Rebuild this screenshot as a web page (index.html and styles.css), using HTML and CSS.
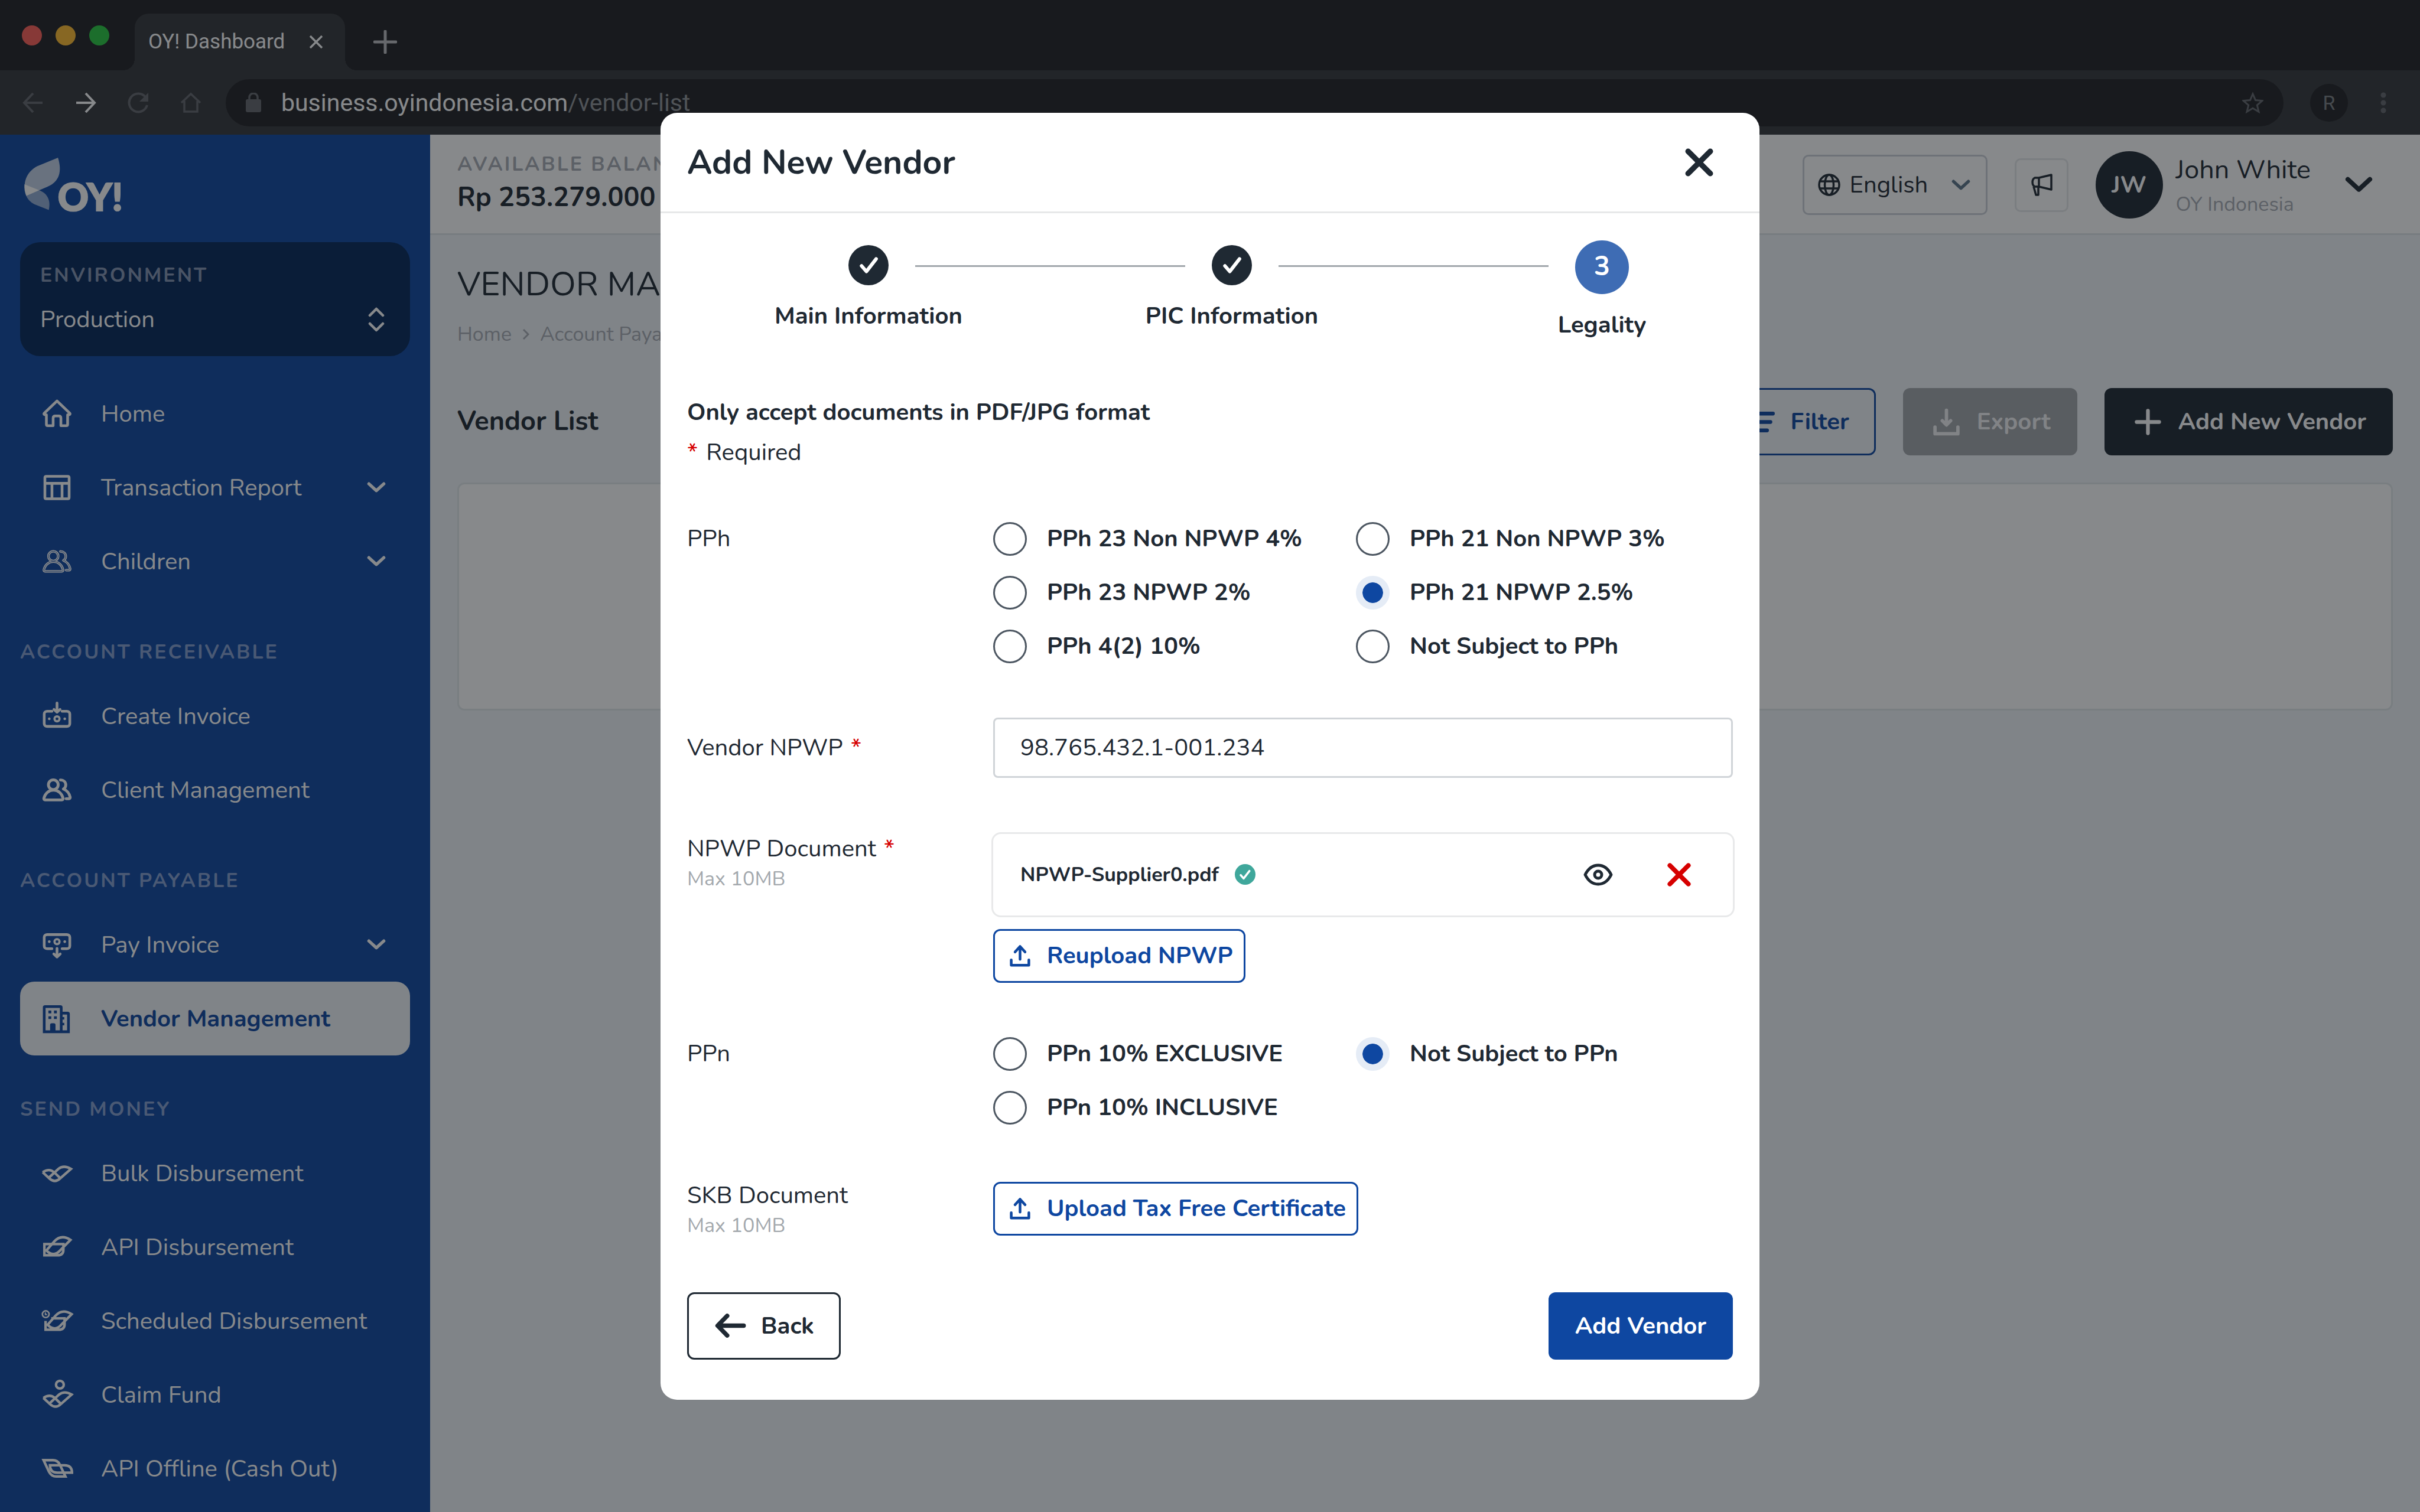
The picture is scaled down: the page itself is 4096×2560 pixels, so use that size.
FILE: index.html
```html
<!DOCTYPE html>
<html lang="en">
<head>
<meta charset="utf-8">
<title>OY! Dashboard</title>
<link rel="stylesheet" href="styles.css">
</head>
<body>
<svg class="sprite" aria-hidden="true">
  <symbol id="chevron" viewBox="0 0 30 18"><path d="M3 3l12 11L27 3" fill="none" stroke="currentColor" stroke-width="5" stroke-linecap="round" stroke-linejoin="round"/></symbol>
  <symbol id="cross" viewBox="0 0 46 46"><path d="M5 5l36 36M41 5L5 41" fill="none" stroke="currentColor" stroke-width="9" stroke-linecap="round"/></symbol>
  <symbol id="tick" viewBox="0 0 34 34"><path d="M7 18l7 8 14-18" fill="none" stroke="currentColor" stroke-width="5" stroke-linecap="round" stroke-linejoin="round"/></symbol>
  <symbol id="upload" viewBox="0 0 16 16"><path d="M8 10V3.4M5 5.6l3-3.3 3 3.3M2.7 10.4v3.2h10.6v-3.2" fill="none" stroke="currentColor" stroke-width="1.6" stroke-linecap="round" stroke-linejoin="round"/></symbol>
  <symbol id="users" viewBox="0 0 20 20"><g fill="none" stroke-linecap="round" stroke-linejoin="round"><circle cx="7.8" cy="6.9" r="2.9"/><path d="M2.2 15c.6-2.8 2.9-4.9 5.7-4.9s5.1 2.1 5.7 4.9c.1.5-.2.9-.7.9H2.9c-.5 0-.8-.4-.7-.9zM12 4.1c1.9 0 3.2 1.2 3.2 2.9 0 1-.5 1.9-1.4 2.4 2 .8 3.6 2.8 4 4.9.1.5-.2.9-.7.9h-1.700"/></g></symbol>
  <symbol id="leaves" viewBox="0 0 20 20"><path d="M1.5 9.4l4 3.7q3.2 2.9 6.3 0l6.5-5.7q-4.3-2.5-7.5 0l-5.6 5.2M1.5 9.4q3.800-2.600 6.800 0l3.600 3.500" fill="none" stroke="currentColor" stroke-width="1.5"/></symbol>
</svg>

<header class="browser">
  <div class="tabstrip">
    <div class="lights"><i class="light red"></i><i class="light amber"></i><i class="light green"></i></div>
    <div class="tab">
      <span>OY! Dashboard</span>
      <button class="bare" aria-label="Close tab"><svg width="24" height="24" viewBox="0 0 24 24"><path d="M2 2l20 20M22 2L2 22" stroke="currentColor" stroke-width="3.500"/></svg></button>
    </div>
    <button class="bare newtab" aria-label="New tab"><svg width="40" height="40" viewBox="0 0 40 40"><path d="M20 2v36M2 20h36" stroke="currentColor" stroke-width="5" stroke-linecap="round"/></svg></button>
  </div>
  <div class="toolbar">
    <div class="navbtns">
      <button class="bare faint" aria-label="Back"><svg width="36" height="36" viewBox="0 0 36 36"><path d="M34 18H3M18 2L3 18l15 16" fill="none" stroke="currentColor" stroke-width="4"/></svg></button>
      <button class="bare" aria-label="Forward"><svg width="36" height="36" viewBox="0 0 36 36"><path d="M2 18h31M18 2l15 16-15 16" fill="none" stroke="currentColor" stroke-width="4"/></svg></button>
      <button class="bare faint" aria-label="Reload"><svg width="36" height="36" viewBox="0 0 36 36"><path d="M30 8A15.500 15.500 0 1 0 33 22" fill="none" stroke="currentColor" stroke-width="4"/><path d="M35 1v15H20z" fill="currentColor"/></svg></button>
      <button class="bare faint" aria-label="Home"><svg width="36" height="36" viewBox="0 0 36 36"><path d="M2 18L18 3l16 15M7 15v18h22V15" fill="none" stroke="currentColor" stroke-width="3.500"/></svg></button>
    </div>
    <div class="address">
      <svg class="faint" width="26" height="34" viewBox="0 0 26 34"><rect y="11" width="26" height="22" rx="3" fill="currentColor"/><path d="M6 12V8a7 7 0 0 1 14 0v4" fill="none" stroke="currentColor" stroke-width="3.500"/></svg>
      <span class="url">business.oyindonesia.com<span class="path">/vendor-list</span></span>
      <svg class="faint" width="36" height="36" viewBox="0 0 36 36"><path d="M18 3l4.500 10.500 11.500 1-8.700 7.500 2.700 11.200L18 27.200 8 33.200 10.700 22 2 14.500l11.500-1z" fill="none" stroke="currentColor" stroke-width="3"/></svg>
    </div>
    <span class="profile">R</span>
    <svg class="faint" width="10" height="36" viewBox="0 0 10 36"><circle cx="5" cy="5" r="4.500" fill="currentColor"/><circle cx="5" cy="18" r="4.500" fill="currentColor"/><circle cx="5" cy="31" r="4.500" fill="currentColor"/></svg>
  </div>
</header>

<div class="app">
  <aside class="sidebar">
    <svg class="logo" viewBox="0 0 630 420" role="img" aria-label="OY!">
      <path d="M222 66C245 140 230 195 165 222L52 270C30 205 50 145 110 112z" fill="#fff" fill-opacity=".75"/>
      <path d="M42 208L120 240C165 255 185 295 173 346L95 315C55 295 38 255 42 208z" fill="#fff" fill-opacity=".55"/>
      <path d="M44 210L120 240 54 269C45 250 42 228 44 210z" fill="#fff"/>
      <text class="logo-text" x="221" y="350">OY!</text>
    </svg>
    <div class="env">
      <label class="caption" for="env">ENVIRONMENT</label>
      <div class="env-pick">
        <select id="env"><option>Production</option></select>
        <svg width="30" height="42" viewBox="0 0 30 42"><path d="M4 14L15 3l11 11M4 28l11 11 11-11" fill="none" stroke="currentColor" stroke-width="4.500" stroke-linecap="round" stroke-linejoin="round"/></svg>
      </div>
    </div>
    <nav>
      <a class="item" href="#"><svg class="ico" viewBox="0 0 20 20"><path d="M10 2.400L17.600 9.700c.4.4.1.9-.4.9h-.9v5.700q0 .8-.8.8h-3.200v-4.500q0-1.300-1.300-1.300H9q-1.300 0-1.300 1.300v4.500H4.500q-.8 0-.8-.8v-5.700H2.800c-.5 0-.8-.5-.4-.9z" fill="none" stroke="currentColor" stroke-width="1.600" stroke-linejoin="round"/></svg><span>Home</span></a>
      <a class="item" href="#"><svg class="ico" viewBox="0 0 20 20"><path d="M3.600 3.300h12.800q.8 0 .8.800v11.800q0 .8-.8.800H3.600q-.8 0-.8-.8V4.100q0-.8.800-.8zM2.800 7.500h14.400M7 7.500v9M13 7.500v9" fill="none" stroke="currentColor" stroke-width="1.600"/></svg><span>Transaction Report</span><svg class="chev"><use href="#chevron"/></svg></a>
      <a class="item" href="#"><svg class="ico" viewBox="0 0 20 20"><use href="#users" stroke="currentColor" stroke-width="1.500"/><use href="#users" stroke="#0e47a1" stroke-width=".3"/></svg><span>Children</span><svg class="chev"><use href="#chevron"/></svg></a>
      <h2 class="caption section">ACCOUNT RECEIVABLE</h2>
      <a class="item" href="#"><svg class="ico" viewBox="0 0 20 20"><path d="M7 7.100H4.200c-1 0-1.800.6-1.800 1.600v5.800c0 1 .8 1.600 1.800 1.600h11.600c1 0 1.800-.6 1.800-1.600V8.700c0-1-.8-1.600-1.800-1.600H13M10 2.200v5.300M8.200 6L10 7.700 11.800 6" fill="none" stroke="currentColor" stroke-width="1.600" stroke-linecap="round" stroke-linejoin="round"/><circle cx="10" cy="11.600" r="1.500" fill="none" stroke="currentColor" stroke-width="1.300"/><circle cx="5.400" cy="11.600" r=".8" fill="currentColor"/><circle cx="14.600" cy="11.600" r=".8" fill="currentColor"/></svg><span>Create Invoice</span></a>
      <a class="item" href="#"><svg class="ico" viewBox="0 0 20 20"><use href="#users" stroke="currentColor" stroke-width="1.700"/></svg><span>Client Management</span></a>
      <h2 class="caption section">ACCOUNT PAYABLE</h2>
      <a class="item" href="#"><svg class="ico" viewBox="0 0 20 20"><path d="M7 12.400H4.200c-1 0-1.800-.6-1.800-1.600V5.600c0-1 .8-1.600 1.800-1.600h11.600c1 0 1.800.6 1.800 1.600v5.200c0 1-.8 1.600-1.800 1.600H13M10 12.200v5M8.100 15.500l1.900 1.800 1.900-1.800" fill="none" stroke="currentColor" stroke-width="1.600" stroke-linecap="round" stroke-linejoin="round"/><circle cx="10" cy="8.200" r="1.500" fill="none" stroke="currentColor" stroke-width="1.300"/><circle cx="5.400" cy="8.200" r=".8" fill="currentColor"/><circle cx="14.600" cy="8.200" r=".8" fill="currentColor"/></svg><span>Pay Invoice</span><svg class="chev"><use href="#chevron"/></svg></a>
      <a class="item active" href="#" aria-current="page"><svg class="ico" viewBox="0 0 20 20"><path fill="currentColor" fill-rule="evenodd" d="M1.600 18.700V3.400q0-1.300 1.300-1.300H12q1.300 0 1.300 1.300V6h3q1.300 0 1.300 1.300v11.400zM3.200 3.700V17h2.700v-3.200q0-1 1-1h1.200q1 0 1 1V17h2.600V3.700zM4.900 5.300h1.700v1.600H4.900zM8.200 5.300h1.700v1.600H8.200zM4.900 8.700h1.700v1.600H4.900zM8.200 8.700h1.700v1.600H8.200zM13.300 7.600v1.500h1v1.500h-1v1.900h1V14h-1v3H16V7.600z"/></svg><span>Vendor Management</span></a>
      <h2 class="caption section">SEND MONEY</h2>
      <a class="item" href="#"><svg class="ico" viewBox="0 0 20 20"><use href="#leaves"/></svg><span>Bulk Disbursement</span></a>
      <a class="item" href="#"><svg class="ico" viewBox="0 0 20 20"><path d="M2.500 8.200h11.300v3.300q0 3.400-3.400 3.400H2.500zM3.700 12l4.800-5.500q4.100-4.300 9.500-.8l-6.800 6.900q-3.600 3.400-7.500-.6z" fill="none" stroke="currentColor" stroke-width="1.500"/></svg><span>API Disbursement</span></a>
      <a class="item" href="#"><svg class="ico" viewBox="0 0 20 20"><path d="M6.600 8.500h7.900v3.300q0 3.400-3.400 3.400H3.200V10M4.400 12.300l4.800-5.500q4.100-4.300 9.500-.8l-6.800 6.900q-3.600 3.400-7.500-.6z" fill="none" stroke="currentColor" stroke-width="1.500"/><circle cx="3.300" cy="6" r="2" fill="none" stroke="currentColor" stroke-width=".9"/><path d="M3.100 4.900v1.300h1" fill="none" stroke="currentColor" stroke-width=".7"/></svg><span>Scheduled Disbursement</span></a>
      <a class="item" href="#"><svg class="ico" viewBox="0 0 20 20"><use href="#leaves" x=".4" y="2.500" width="20" height="20"/><circle cx="11.700" cy="4" r="2.300" fill="none" stroke="currentColor" stroke-width="1.500"/></svg><span>Claim Fund</span></a>
      <a class="item" href="#"><svg class="ico" viewBox="0 0 20 20"><path d="M2 5h5.500q2.800 0 4.100 2.500l3.400 7.200H9.500Q6.800 14.700 5.300 12zM5.800 8h8.700q4.400 0 4.400 4.400H10Q5.800 12.400 5.800 8z" fill="none" stroke="currentColor" stroke-width="1.500"/></svg><span>API Offline (Cash Out)</span></a>
    </nav>
  </aside>

  <div class="main">
    <header class="topbar">
      <div class="balance">
        <span class="caption muted">AVAILABLE BALANCE</span>
        <strong>Rp 253.279.000</strong>
      </div>
      <label class="lang">
        <svg width="38" height="38" viewBox="0 0 38 38"><g fill="none" stroke="currentColor" stroke-width="3.500"><circle cx="19" cy="19" r="17"/><ellipse cx="19" cy="19" rx="7.500" ry="17"/><path d="M3 13h32M3 25h32"/></g></svg>
        <select aria-label="Language"><option>English</option></select>
        <svg class="chev slate"><use href="#chevron"/></svg>
      </label>
      <button class="announce" aria-label="Announcements"><svg width="40" height="40" viewBox="0 0 40 40"><path d="M37 3L16 8H9a6 8 0 0 0 0 15h7l21 5zM16 8v15M7 23l4 14h4V23" fill="none" stroke="currentColor" stroke-width="3.500" stroke-linejoin="round"/></svg></button>
      <div class="user">
        <span class="avatar">JW</span>
        <span class="who"><span class="name">John White</span><span class="org">OY Indonesia</span></span>
        <svg class="bigchev"><use href="#chevron"/></svg>
      </div>
    </header>
    <main class="content">
      <h1>VENDOR MANAGEMENT</h1>
      <div class="crumbs"><a href="#">Home</a><svg width="12" height="20" viewBox="0 0 12 20"><path d="M2 2l8 8-8 8" fill="none" stroke="currentColor" stroke-width="3"/></svg><a href="#">Account Payable</a></div>
      <div class="listbar">
        <h2>Vendor List</h2>
        <button class="btn outline"><svg class="ico" viewBox="0 0 20 20"><path d="M3 5h14.500M5 10h11M7 15h7" stroke="currentColor" stroke-width="2.200" stroke-linecap="round"/></svg>Filter</button>
        <button class="btn disabled" disabled><svg class="ico" viewBox="0 0 20 20"><path d="M10 3v8.500M7.500 9.200l2.500 2.600 2.500-2.600M3.200 13v4h13.600v-4" fill="none" stroke="currentColor" stroke-width="2" stroke-linecap="round" stroke-linejoin="round"/></svg>Export</button>
        <button class="btn dark"><svg class="ico" viewBox="0 0 20 20"><path d="M10 3.300v13.400M3.300 10h13.400" stroke="currentColor" stroke-width="2.200" stroke-linecap="round"/></svg>Add New Vendor</button>
      </div>
      <section class="card"></section>
    </main>
  </div>
</div>

<div class="overlay">
  <form class="modal" role="dialog" aria-labelledby="modal-title">
    <header class="modal-head">
      <h2 id="modal-title">Add New Vendor</h2>
      <button type="button" class="bare" aria-label="Close"><svg width="48" height="48"><use href="#cross"/></svg></button>
    </header>
    <div class="modal-body">
      <ol class="steps">
        <li class="step"><span class="dot"><svg width="40" height="40"><use href="#tick"/></svg></span><span>Main Information</span></li>
        <li class="line" aria-hidden="true"></li>
        <li class="step"><span class="dot"><svg width="40" height="40"><use href="#tick"/></svg></span><span>PIC Information</span></li>
        <li class="line" aria-hidden="true"></li>
        <li class="step current"><span class="dot">3</span><span>Legality</span></li>
      </ol>
      <div class="intro"><strong>Only accept documents in PDF/JPG format</strong><span><span class="req">*</span> Required</span></div>

      <div class="rows">
        <div class="row" role="radiogroup" aria-labelledby="pph">
          <span class="field" id="pph">PPh</span>
          <div class="options">
            <label><input type="radio" name="pph">PPh 23 Non NPWP 4%</label>
            <label><input type="radio" name="pph">PPh 21 Non NPWP 3%</label>
            <label><input type="radio" name="pph">PPh 23 NPWP 2%</label>
            <label><input type="radio" name="pph" checked>PPh 21 NPWP 2.5%</label>
            <label><input type="radio" name="pph">PPh 4(2) 10%</label>
            <label><input type="radio" name="pph">Not Subject to PPh</label>
          </div>
        </div>
        <div class="row middle">
          <label class="field" for="npwp">Vendor NPWP <span class="req">*</span></label>
          <input class="text" id="npwp" type="text" value="98.765.432.1-001.234">
        </div>
        <div class="row">
          <div class="field">NPWP Document <span class="req">*</span><small>Max 10MB</small></div>
          <div class="uploads">
            <div class="file">
              <span class="filename">NPWP-Supplier0.pdf</span>
              <span class="ok"><svg width="24" height="24"><use href="#tick"/></svg></span>
              <button type="button" class="bare eye" aria-label="Preview"><svg width="50" height="38" viewBox="0 0 50 38"><path d="M3 19C8 9 16 3 25 3s17 6 22 16c-5 10-13 16-22 16S8 29 3 19z" fill="none" stroke="currentColor" stroke-width="5" stroke-linejoin="round"/><circle cx="25" cy="19" r="6" fill="none" stroke="currentColor" stroke-width="5"/></svg></button>
              <button type="button" class="bare remove" aria-label="Remove"><svg width="40" height="40"><use href="#cross"/></svg></button>
            </div>
            <button type="button" class="btn outline small"><svg class="up"><use href="#upload"/></svg>Reupload NPWP</button>
          </div>
        </div>
        <div class="row" role="radiogroup" aria-labelledby="ppn">
          <span class="field" id="ppn">PPn</span>
          <div class="options">
            <label><input type="radio" name="ppn">PPn 10% EXCLUSIVE</label>
            <label><input type="radio" name="ppn" checked>Not Subject to PPn</label>
            <label><input type="radio" name="ppn">PPn 10% INCLUSIVE</label>
          </div>
        </div>
        <div class="row">
          <div class="field">SKB Document<small>Max 10MB</small></div>
          <div class="uploads"><button type="button" class="btn outline small"><svg class="up"><use href="#upload"/></svg>Upload Tax Free Certificate</button></div>
        </div>
      </div>

      <footer class="actions">
        <button type="button" class="btn ghost"><svg class="ico" viewBox="0 0 20 20"><path d="M17.800 10H2.500M8 4.200L2.300 10 8 15.800" fill="none" stroke="currentColor" stroke-width="2.600" stroke-linecap="round" stroke-linejoin="round"/></svg>Back</button>
        <button type="submit" class="btn primary">Add Vendor</button>
      </footer>
    </div>
  </form>
</div>
</body>
</html>
```
FILE: styles.css
```css
:root {
  --ink: #1f2933;
  --blue: #0e47a1;
  --red: #d60000;
  --muted: #a9adb5;
}

* { box-sizing: border-box; }

body {
  margin: 0;
  min-height: 100vh;
  display: flex;
  flex-direction: column;
  overflow: hidden;
  background: #f0f4f8;
  color: var(--ink);
  font: 40px/56px "Nunito", "Lato", sans-serif;
}

h1, h2, ol { margin: 0; padding: 0; font-weight: 400; }
a { color: inherit; text-decoration: none; }
svg { display: block; flex: none; }
button, input, select { font: inherit; color: inherit; }
select { appearance: none; border: 0; padding: 0; background: none; flex: 1; min-width: 0; }

.sprite { position: absolute; width: 0; height: 0; }
.bare { border: 0; padding: 0; background: none; }
.ico { width: 57px; height: 57px; }
.chev { width: 32px; height: 19px; }
.bigchev { width: 47px; height: 28px; margin-left: 58px; }
.slate { color: #5c7488; }
.faint { color: #64676d; }
.req { color: var(--red); padding-right: 4px; }

/* browser chrome */
.browser { font-family: Roboto, sans-serif; color: #fff; }
.tabstrip {
  display: flex;
  align-items: center;
  height: 119px;
  background: #202124;
}
.lights { display: flex; gap: 23px; padding-left: 37px; }
.light { width: 34px; height: 34px; border-radius: 50%; }
.red { background: #ff5f57; }
.amber { background: #febb2e; }
.green { background: #28c840; }
.tab {
  position: relative;
  display: flex;
  align-items: center;
  justify-content: space-between;
  align-self: flex-end;
  width: 356px;
  height: 96px;
  margin-left: 43px;
  padding: 0 37px 0 23px;
  border-radius: 24px 24px 0 0;
  background: #35363a;
  font-size: 35px;
}
.tab::before, .tab::after {
  content: "";
  position: absolute;
  bottom: 0;
  width: 20px;
  height: 20px;
}
.tab::before { right: 100%; background: radial-gradient(circle at 0 0, transparent 20px, #35363a 20px); }
.tab::after { left: 100%; background: radial-gradient(circle at 100% 0, transparent 20px, #35363a 20px); }
.newtab { margin: 22px 0 0 48px; color: #bcbdc0; }
.toolbar {
  display: flex;
  align-items: center;
  height: 109px;
  padding: 0 57px 0 38px;
  background: #35363a;
}
.navbtns { display: flex; gap: 53px; }
.address {
  flex: 1;
  display: flex;
  align-items: center;
  gap: 34px;
  height: 80px;
  margin: 0 45px 0 41px;
  padding: 0 34px;
  border-radius: 40px;
  background: #202124;
  font-size: 41px;
}
.url { flex: 1; }
.path { color: #8f9296; }
.profile {
  width: 64px;
  height: 64px;
  margin-right: 55px;
  border-radius: 50%;
  background: #202124;
  color: #7d8085;
  font-size: 34px;
  line-height: 64px;
  text-align: center;
}

/* application shell */
.app { flex: 1; display: flex; }
.sidebar {
  width: 728px;
  flex: none;
  padding: 18px 34px 0;
  background: var(--blue);
  color: #fff;
}
.logo { width: 199px; height: 133px; margin-left: -6px; }
.logo-text {
  font: 900 204px "Lato", sans-serif;
  fill: #fff;
  stroke: #fff;
  stroke-width: 7px;
}
.caption {
  font-size: 34px;
  line-height: 44px;
  font-weight: 700;
  letter-spacing: 3px;
}
.env {
  margin: 31px 0 35px;
  padding: 34px;
  border-radius: 34px;
  background: #052658;
}
.env .caption { display: block; color: #8495b3; }
.env-pick {
  display: flex;
  align-items: center;
  height: 56px;
  margin-top: 25px;
  padding-right: 8px;
}
.item {
  display: flex;
  align-items: center;
  gap: 46px;
  height: 125px;
  padding: 0 41px 0 34px;
  border-radius: 24px;
}
.item span { flex: 1; }
.active { background: #f0f4f8; color: var(--blue); font-weight: 700; }
.section { padding: 69px 0 24px; color: #849fd0; }

.main { flex: 1; min-width: 0; }
.topbar {
  display: flex;
  align-items: center;
  gap: 46px;
  height: 170px;
  padding: 3px 80px 0 46px;
  border-bottom: 3px solid #dfe5e8;
  background: #fff;
}
.balance { flex: 1; display: flex; flex-direction: column; }
.balance strong { font-size: 45px; line-height: 70px; }
.muted { color: var(--muted); }
.lang {
  display: flex;
  align-items: center;
  gap: 16px;
  width: 313px;
  height: 102px;
  padding: 0 26px 0 23px;
  border: 3px solid #cdd1d8;
  border-radius: 10px;
}
.announce {
  display: grid;
  place-items: center;
  width: 91px;
  height: 91px;
  padding: 0;
  border: 3px solid #e6e8ea;
  border-radius: 10px;
  background: none;
}
.user { display: flex; align-items: center; }
.avatar {
  width: 114px;
  height: 114px;
  margin-right: 22px;
  border-radius: 50%;
  background: var(--ink);
  color: #fff;
  font-size: 40px;
  font-weight: 700;
  line-height: 114px;
  text-align: center;
}
.who { display: flex; flex-direction: column; padding-top: 6px; }
.name { font-size: 45px; line-height: 60px; }
.org { font-size: 34px; line-height: 56px; color: var(--muted); }

.content { padding: 46px; }
h1 { font-size: 57px; line-height: 74px; white-space: nowrap; }
.crumbs {
  display: flex;
  align-items: center;
  gap: 18px;
  margin: 25px 0 68px;
  font-size: 34px;
  line-height: 46px;
  color: var(--muted);
}
.listbar { display: flex; align-items: center; gap: 46px; }
.listbar h2 { flex: 1; font-size: 45px; font-weight: 700; }
.btn {
  display: flex;
  align-items: center;
  gap: 23px;
  height: 114px;
  padding: 0 42px;
  border: 3px solid transparent;
  border-radius: 12px;
  background: none;
  font-weight: 700;
  white-space: nowrap;
}
.outline { border-color: var(--blue); color: var(--blue); }
.disabled { background: #a3a6ab; color: #f2f3f4; }
.dark { background: var(--ink); color: #fff; }
.primary { background: var(--blue); color: #fff; }
.ghost { border-color: var(--ink); }
.small { height: 91px; padding: 0 18px 0 20px; }
.up { width: 45px; height: 45px; }
.card {
  min-height: 386px;
  margin-top: 46px;
  border: 3px solid #e2e8eb;
  border-radius: 12px;
  background: #fff;
}

/* dialog */
.overlay {
  position: fixed;
  inset: 0;
  display: grid;
  justify-content: center;
  align-content: center;
  grid-template-columns: minmax(0, 1860px);
  background: rgba(16, 20, 24, .5);
}
.modal { border-radius: 28px; background: #fff; }
.modal-head {
  display: flex;
  align-items: center;
  justify-content: space-between;
  height: 170px;
  padding: 2px 78px 0 45px;
  border-bottom: 3px solid #e7e8e9;
}
.modal-head h2 { font-size: 57px; line-height: 74px; font-weight: 700; }
.modal-body { padding: 46px 45px 68px; }
.steps {
  display: flex;
  gap: 45px;
  padding: 0 176px 0 273px;
  list-style: none;
  font-weight: 700;
}
.step {
  display: flex;
  flex-direction: column;
  align-items: center;
  gap: 20px;
  width: 68px;
  padding-top: 8px;
  line-height: 64px;
  white-space: nowrap;
}
.dot {
  display: grid;
  place-items: center;
  width: 68px;
  height: 68px;
  border-radius: 50%;
  background: var(--ink);
  color: #fff;
}
.line { flex: 1; height: 3px; margin-top: 42px; background: #a3a8ad; }
.current { width: 91px; padding-top: 0; }
.current .dot { width: 91px; height: 91px; background: #3e6cb4; font-size: 45px; }
.intro {
  display: flex;
  flex-direction: column;
  margin: 82px 0 84px;
  line-height: 68px;
}
.rows { display: grid; gap: 92px; }
.row {
  display: grid;
  grid-template-columns: 518px minmax(0, 1fr);
  align-items: start;
}
.middle { align-items: center; }
.field .req { padding-left: 3px; }
.field small { display: block; font-size: 34px; line-height: 46px; color: #a3a8ad; }
.options {
  display: grid;
  grid-template-columns: 580px 1fr;
  gap: 34px;
  font-weight: 700;
}
.options label { display: flex; align-items: center; gap: 34px; white-space: nowrap; }
.options input {
  appearance: none;
  width: 57px;
  height: 57px;
  margin: 0;
  border: 3px solid #4c5661;
  border-radius: 50%;
}
.options input:checked {
  border: 11px solid #e5ecf6;
  background: var(--blue);
  background-clip: padding-box;
}
.text {
  width: 100%;
  height: 102px;
  padding: 0 43px;
  border: 3px solid #d0d4d8;
  border-radius: 8px;
  background: #fff;
}
.uploads {
  display: flex;
  flex-direction: column;
  align-items: flex-start;
  gap: 20px;
}
.uploads > .btn:only-child { margin-top: 5px; }
.file {
  align-self: stretch;
  display: flex;
  align-items: center;
  height: 144px;
  margin: 0 -3px;
  padding: 0 71px 0 46px;
  border: 3px solid #e8e9ea;
  border-radius: 16px;
}
.filename { font-size: 34px; font-weight: 700; }
.ok {
  display: grid;
  place-items: center;
  width: 35px;
  height: 35px;
  margin-left: 27px;
  border-radius: 50%;
  background: #3fa79b;
  color: #fff;
}
.eye { margin-left: auto; }
.remove { margin-left: 92px; color: var(--red); }
.actions { display: flex; justify-content: space-between; margin-top: 90px; }
```
